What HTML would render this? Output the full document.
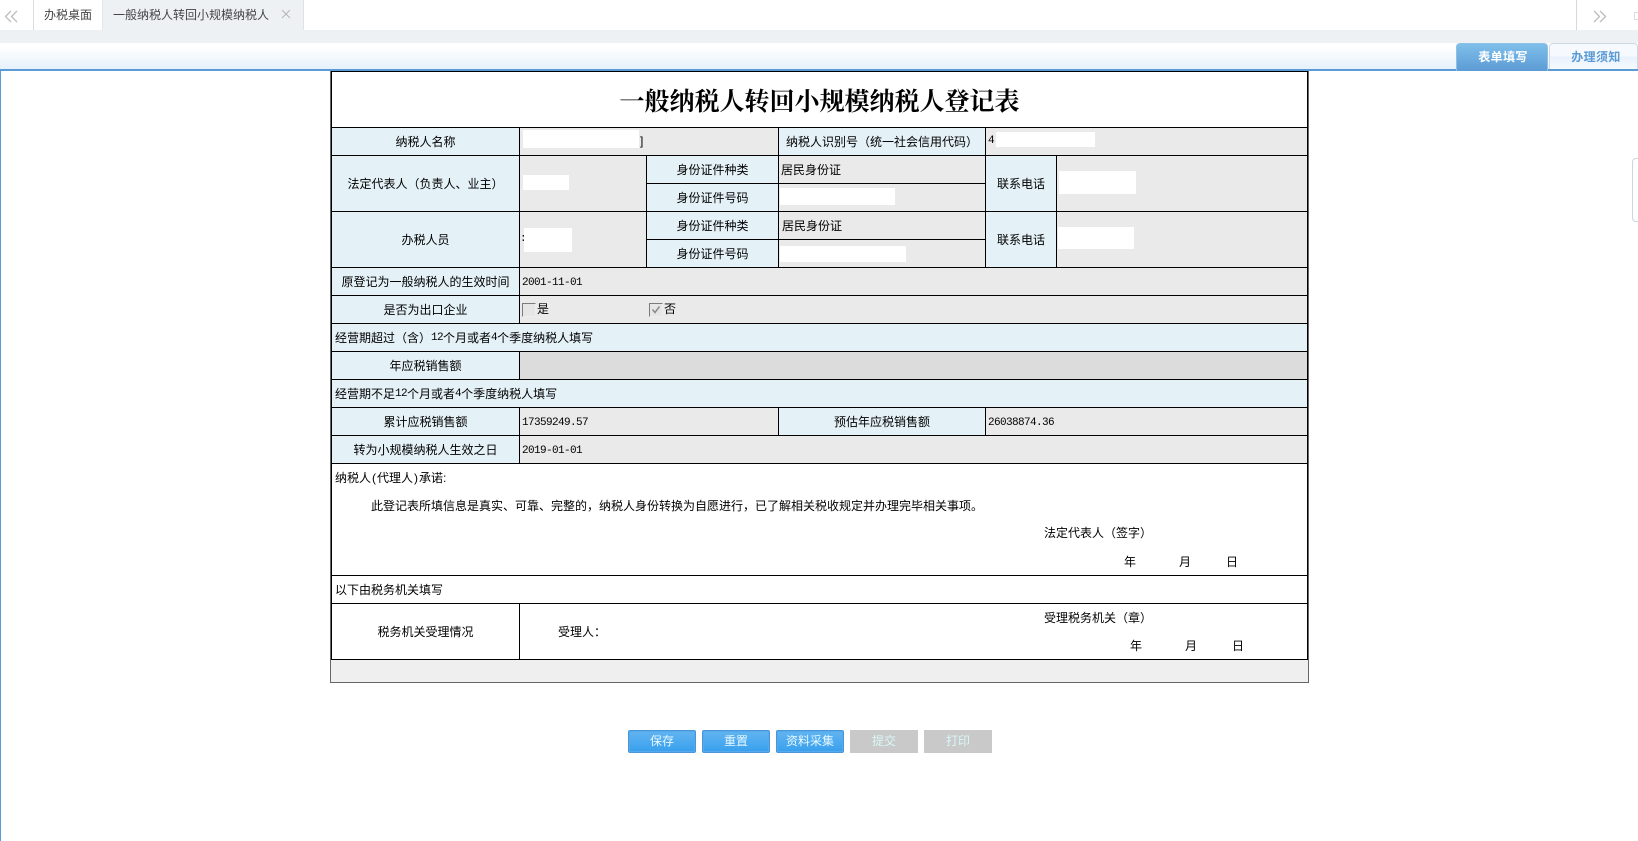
<!DOCTYPE html>
<html lang="zh">
<head>
<meta charset="utf-8">
<title>一般纳税人转回小规模纳税人登记表</title>
<style>
html,body{margin:0;padding:0;width:1638px;height:841px;overflow:hidden;background:#fff}
body{position:relative;font-family:"Liberation Sans","WenQuanYi Zen Hei","Noto Sans CJK SC",sans-serif;font-size:12px;color:#000}
div,span.a{position:absolute;box-sizing:border-box}
.c{border-left:1px solid #000;border-top:1px solid #000;display:flex;align-items:center;justify-content:center;line-height:12px;white-space:nowrap}
.l{background:#e4f1f7}
.v{background:#eaeaea}
.w{background:#fff}
.f{justify-content:flex-start;padding-left:3px}
.t{line-height:14px;height:14px;white-space:nowrap}
.n{font-family:"Liberation Mono",monospace;font-size:11px;letter-spacing:-.6px}
.f.n{padding-left:2px;padding-top:2px}
.m{background:#fff}
.p{display:inline-block;width:6px;text-align:center}
.b{top:730px;width:68px;height:23px;text-align:center;line-height:21px;color:#e8f9ff;white-space:nowrap}
.bb{background:linear-gradient(#62b4f0,#38a0ee);border:1px solid #4a96d6;border-radius:2px;box-shadow:inset 0 0 0 1px #54aaec}
.bd{background:#c9c9c9;line-height:23px;color:#d8f8f6}
.cb{width:14px;height:14px;top:303px;border:1px solid;border-color:#7b7b7b #eee #eee #7b7b7b;background:#e6e6e6}
</style>
</head>
<body>
<!-- top tab bar -->
<div style="left:0;top:0;width:1638px;height:30px;background:#fff"></div>
<svg style="position:absolute;left:4px;top:10px" width="15" height="13" viewBox="0 0 15 13"><path d="M7 1L1.500 6.500L7 12M13 1L7.500 6.500L13 12" fill="none" stroke="#bdbdbd" stroke-width="1.300"/></svg>
<div style="left:33px;top:0;width:1px;height:30px;background:#dcdcdc"></div>
<div class="t" style="left:44px;top:8px;color:#444">办税桌面</div>
<div style="left:102px;top:0;width:202px;height:30px;background:#eef1f4;border-left:1px solid #e4e6e9;border-right:1px solid #e0e2e5"></div>
<div class="t" style="left:113px;top:8px;color:#444">一般纳税人转回小规模纳税人</div>
<svg style="position:absolute;left:281px;top:9px" width="10" height="10" viewBox="0 0 10 10"><path d="M1 1L9 9M9 1L1 9" fill="none" stroke="#b5b5b5" stroke-width="1"/></svg>
<div style="left:1576px;top:0;width:1px;height:30px;background:#d8d8d8"></div>
<svg style="position:absolute;left:1592px;top:10px" width="15" height="13" viewBox="0 0 15 13"><path d="M2 1L7.500 6.500L2 12M8 1L13.500 6.500L8 12" fill="none" stroke="#bdbdbd" stroke-width="1.300"/></svg>
<div style="left:1634px;top:12px;width:4px;height:8px;border:1px solid #dcdcdc;border-right:0"></div>
<div style="left:0;top:30px;width:1638px;height:13px;background:#eef1f4"></div>
<div style="left:0;top:43px;width:1638px;height:26px;background:linear-gradient(#fff 15%,#e6f1fb)"></div>
<!-- sub tabs -->
<div style="left:1456px;top:43px;width:92px;height:28px;background:linear-gradient(#7fbfea,#5c9bd5);border:1px solid #8fc0e6;border-bottom:0;border-radius:4px 4px 0 0;color:#fff;font-weight:bold;text-align:center;line-height:27px;letter-spacing:.4px;padding-left:2px">表单填写</div>
<div style="left:1549px;top:43px;width:89px;height:26px;background:linear-gradient(#f6faff 50%,#e8f1fc 50%,#f6faff);border:1px solid #cdd8e4;border-bottom:0;border-radius:4px 4px 0 0;color:#5b9bd5;font-weight:bold;text-align:center;line-height:27px;padding-left:5px;letter-spacing:.4px">办理须知</div>
<div style="left:0;top:69px;width:1456px;height:2px;background:#5b9bd5"></div>
<div style="left:1548px;top:69px;width:90px;height:2px;background:#5b9bd5"></div>
<div style="left:0;top:69px;width:1px;height:772px;background:#5b9bd5"></div>
<div style="left:1632px;top:158px;width:10px;height:64px;border:1px solid #ccd5e0;border-radius:4px;background:#fff"></div>

<!-- form frame -->
<div style="left:330px;top:71px;width:979px;height:612px;border:1px solid #666;border-top:0;background:#efefef"></div>
<div style="left:331px;top:71px;width:977px;height:589px;background:#fff;border:1px solid #000"></div>
<div style="left:331px;top:71px;width:977px;height:56px;text-align:center;line-height:56px;font-family:'Liberation Serif','Noto Serif CJK SC',serif;font-size:25px;font-weight:bold;color:#000;padding-top:4px">一般纳税人转回小规模纳税人登记表</div>

<!-- row 1 -->
<div class="c l" style="left:331px;top:127px;width:188px;height:28px">纳税人名称</div>
<div class="c v" style="left:519px;top:127px;width:259px;height:28px"></div>
<div class="c l" style="left:778px;top:127px;width:207px;height:28px">纳税人识别号（统一社会信用代码）</div>
<div class="c v" style="left:985px;top:127px;width:322px;height:28px"></div>
<!-- rows 2-3 -->
<div class="c l" style="left:331px;top:155px;width:188px;height:56px">法定代表人（负责人、业主）</div>
<div class="c v" style="left:519px;top:155px;width:127px;height:56px"></div>
<div class="c l" style="left:646px;top:155px;width:132px;height:28px">身份证件种类</div>
<div class="c v f" style="left:778px;top:155px;width:207px;height:28px;padding-left:2px">居民身份证</div>
<div class="c l" style="left:646px;top:183px;width:132px;height:28px">身份证件号码</div>
<div class="c v" style="left:778px;top:183px;width:207px;height:28px"></div>
<div class="c l" style="left:985px;top:155px;width:71px;height:56px">联系电话</div>
<div class="c v" style="left:1056px;top:155px;width:251px;height:56px"></div>
<!-- rows 4-5 -->
<div class="c l" style="left:331px;top:211px;width:188px;height:56px">办税人员</div>
<div class="c v" style="left:519px;top:211px;width:127px;height:56px"></div>
<div class="c l" style="left:646px;top:211px;width:132px;height:28px">身份证件种类</div>
<div class="c v f" style="left:778px;top:211px;width:207px;height:28px">居民身份证</div>
<div class="c l" style="left:646px;top:239px;width:132px;height:28px">身份证件号码</div>
<div class="c v" style="left:778px;top:239px;width:207px;height:28px"></div>
<div class="c l" style="left:985px;top:211px;width:71px;height:56px">联系电话</div>
<div class="c v" style="left:1056px;top:211px;width:251px;height:56px"></div>
<!-- row 6 -->
<div class="c l" style="left:331px;top:267px;width:188px;height:28px">原登记为一般纳税人的生效时间</div>
<div class="c v f n" style="left:519px;top:267px;width:788px;height:28px">2001-11-01</div>
<!-- row 7 -->
<div class="c l" style="left:331px;top:295px;width:188px;height:28px">是否为出口企业</div>
<div class="c v" style="left:519px;top:295px;width:788px;height:28px"></div>
<div class="cb" style="left:522px"></div>
<div class="t" style="left:537px;top:302px">是</div>
<div class="cb" style="left:649px"></div>
<svg style="position:absolute;left:651px;top:305px" width="10" height="10" viewBox="0 0 10 10"><path d="M1.500 4.500L4 7.500L8.500 1.500" fill="none" stroke="#8a8a8a" stroke-width="1.500"/></svg>
<div class="t" style="left:664px;top:302px">否</div>
<!-- row 8 -->
<div class="c l f" style="left:331px;top:323px;width:976px;height:28px">经营期超过（含）<span class="n">12</span>个月或者<span class="n">4</span>个季度纳税人填写</div>
<!-- row 9 -->
<div class="c l" style="left:331px;top:351px;width:188px;height:28px">年应税销售额</div>
<div class="c" style="left:519px;top:351px;width:788px;height:28px;background:#dcdcdc"></div>
<!-- row 10 -->
<div class="c l f" style="left:331px;top:379px;width:976px;height:28px">经营期不足<span class="n">12</span>个月或者<span class="n">4</span>个季度纳税人填写</div>
<!-- row 11 -->
<div class="c l" style="left:331px;top:407px;width:188px;height:28px">累计应税销售额</div>
<div class="c v f n" style="left:519px;top:407px;width:259px;height:28px">17359249.57</div>
<div class="c l" style="left:778px;top:407px;width:207px;height:28px">预估年应税销售额</div>
<div class="c v f n" style="left:985px;top:407px;width:322px;height:28px">26038874.36</div>
<!-- row 12 -->
<div class="c l" style="left:331px;top:435px;width:188px;height:28px">转为小规模纳税人生效之日</div>
<div class="c v f n" style="left:519px;top:435px;width:788px;height:28px">2019-01-01</div>
<!-- promise -->
<div class="c w" style="left:331px;top:463px;width:976px;height:112px"></div>
<div class="t" style="left:335px;top:471px">纳税人<span class="p">(</span>代理人<span class="p">)</span>承诺:</div>
<div class="t" style="left:371px;top:499px">此登记表所填信息是真实、可靠、完整的，纳税人身份转换为自愿进行，已了解相关税收规定并办理完毕相关事项。</div>
<div class="t" style="left:1044px;top:526px">法定代表人（签字）</div>
<div class="t" style="left:1124px;top:555px">年</div>
<div class="t" style="left:1179px;top:555px">月</div>
<div class="t" style="left:1226px;top:555px">日</div>
<!-- tax office -->
<div class="c w f" style="left:331px;top:575px;width:976px;height:28px">以下由税务机关填写</div>
<div class="c w" style="left:331px;top:603px;width:188px;height:56px">税务机关受理情况</div>
<div class="c w" style="left:519px;top:603px;width:788px;height:56px"></div>
<div class="t" style="left:558px;top:625px">受理人：</div>
<div class="t" style="left:1044px;top:611px">受理税务机关（章）</div>
<div class="t" style="left:1130px;top:639px">年</div>
<div class="t" style="left:1185px;top:639px">月</div>
<div class="t" style="left:1232px;top:639px">日</div>
<div style="left:331px;top:659px;width:977px;height:1px;background:#000"></div>

<!-- masks and partial values -->
<div class="m" style="left:523px;top:130px;width:116px;height:18px"></div>
<div class="t" style="left:640px;top:134px">]</div>
<div class="t n" style="left:988px;top:134px">4:</div>
<div class="m" style="left:996px;top:132px;width:99px;height:15px"></div>
<div class="m" style="left:523px;top:175px;width:46px;height:15px"></div>
<div class="t n" style="left:520px;top:232px">:</div>
<div class="m" style="left:524px;top:228px;width:48px;height:24px"></div>
<div class="m" style="left:780px;top:188px;width:115px;height:17px"></div>
<div class="m" style="left:780px;top:246px;width:126px;height:16px"></div>
<div class="m" style="left:1059px;top:171px;width:77px;height:23px"></div>
<div class="m" style="left:1058px;top:227px;width:76px;height:22px"></div>

<!-- buttons -->
<div class="b bb" style="left:628px">保存</div>
<div class="b bb" style="left:702px">重置</div>
<div class="b bb" style="left:776px">资料采集</div>
<div class="b bd" style="left:850px">提交</div>
<div class="b bd" style="left:924px">打印</div>
</body>
</html>
